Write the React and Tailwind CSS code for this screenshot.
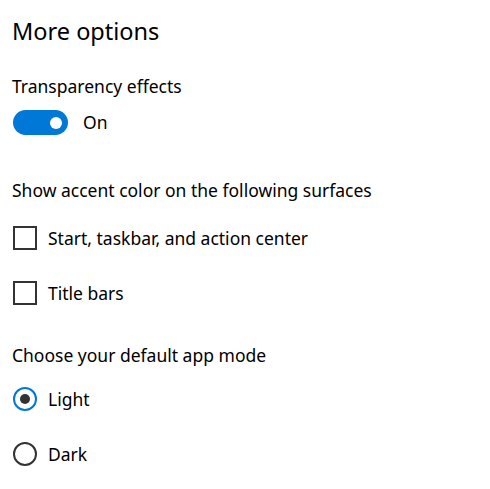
const font = { fontFamily: '"Noto Sans", "Open Sans", sans-serif' }

const Checkbox = ({ label }) => (
  <label className="flex items-center h-[24px]">
    <span className="w-[24px] h-[24px] border-2 border-[#333333] bg-white shrink-0" />
    <span className="ml-[11px] text-[17.5px] leading-[24px] text-black">{label}</span>
  </label>
)

const Radio = ({ label, checked }) => (
  <label className="flex items-center h-[24px]">
    {checked ? (
      <span className="w-[24px] h-[24px] rounded-full border-[2.5px] border-[#0078d7] bg-white shrink-0 flex items-center justify-center">
        <span className="w-[10px] h-[10px] rounded-full bg-[#333333]" />
      </span>
    ) : (
      <span className="w-[24px] h-[24px] rounded-full border-2 border-[#333333] bg-white shrink-0" />
    )}
    <span className="ml-[11px] text-[17.5px] leading-[24px] text-black">{label}</span>
  </label>
)

export default function App() {
  return (
    <div className="w-[490px] h-[489px] bg-white overflow-hidden pl-[12px]" style={font}>
      <div className="flex flex-col">
        <h2 className="mt-[11px] h-[40px] leading-[40px] text-[23.5px] text-black">More options</h2>

        <div className="mt-[20px] h-[30px] leading-[30px] text-[17.5px] text-black">Transparency effects</div>
        <div className="mt-[9px] flex items-center h-[25px]">
          <div className="w-[55px] h-[25px] rounded-full bg-[#0078d7] flex items-center justify-end pr-[6px] ml-[1px]">
            <span className="w-[12px] h-[12px] rounded-full bg-white" />
          </div>
          <span className="ml-[15px] text-[17.5px] text-black">On</span>
        </div>

        <div className="mt-[40px] h-[30px] leading-[30px] text-[17.5px] text-black">Show accent color on the following surfaces</div>
        <div className="mt-[21px] ml-[1px] flex flex-col gap-[31px]">
          <Checkbox label="Start, taskbar, and action center" />
          <Checkbox label="Title bars" />
        </div>

        <div className="mt-[35px] h-[30px] leading-[30px] text-[17.5px] text-black">Choose your default app mode</div>
        <div className="mt-[17px] ml-[1px] flex flex-col gap-[31px]">
          <Radio label="Light" checked />
          <Radio label="Dark" />
        </div>
      </div>
    </div>
  )
}
